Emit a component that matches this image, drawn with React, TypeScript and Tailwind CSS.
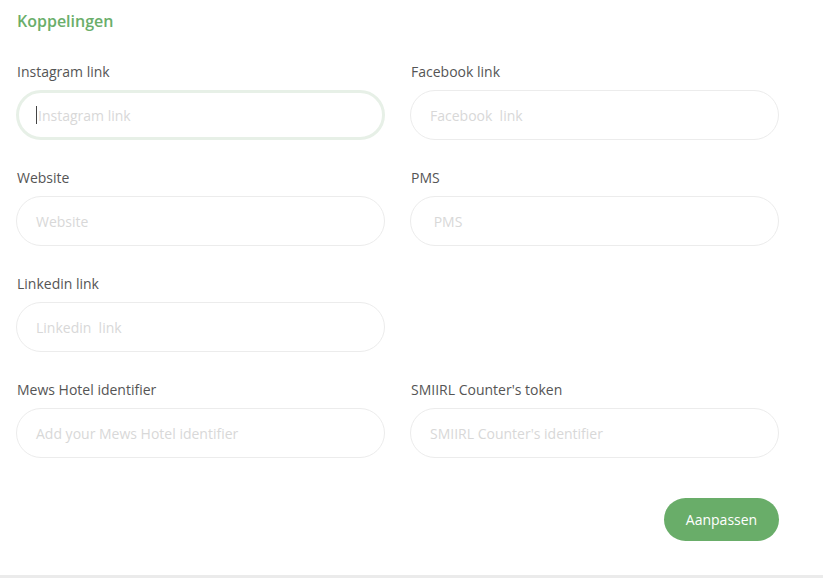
import React from "react";

const Field = ({ label, placeholder, focused }: { label: string; placeholder: string; focused?: boolean }) => (
  <div className="flex flex-col">
    <label className="text-[14px] leading-[20px] text-[#555] mb-[8px] pl-[1px]">{label}</label>
    {focused ? (
      <div className="h-[50px] rounded-full border-[3px] border-[#e7f0e7] flex items-center pl-[17px] box-border">
        <span className="w-px h-[18px] bg-[#444] mr-[1px]" />
        <span className="text-[14px] text-[#d8d8d8]">{placeholder}</span>
      </div>
    ) : (
      <div className="h-[50px] rounded-full border border-[#ececec] flex items-center pl-[19px] box-border">
        <span className="text-[14px] text-[#d8d8d8] whitespace-pre">{placeholder}</span>
      </div>
    )}
  </div>
);

export default function App() {
  return (
    <div className="w-[823px] h-[578px] bg-white flex flex-col overflow-hidden" style={{ fontFamily: '"Open Sans", sans-serif' }}>
      <div className="flex-1 pl-[16px] pt-[9px]">
        <h2 className="text-[16px] leading-[24px] font-semibold text-[#6aae6a] pl-[1px]">Koppelingen</h2>
        <div className="grid grid-cols-[369px_369px] gap-x-[25px] gap-y-[28px] mt-[29px]">
          <Field label="Instagram link" placeholder="Instagram link" focused />
          <Field label="Facebook link" placeholder="Facebook  link" />
          <Field label="Website" placeholder="Website" />
          <Field label="PMS" placeholder=" PMS" />
          <Field label="Linkedin link" placeholder="Linkedin  link" />
          <div />
          <Field label="Mews Hotel identifier" placeholder="Add your Mews Hotel identifier" />
          <Field label="SMIIRL Counter's token" placeholder="SMIIRL Counter's identifier" />
        </div>
        <div className="flex justify-end w-[763px] mt-[40px]">
          <button className="w-[115px] h-[43px] rounded-full bg-[#69ad69] text-white text-[14px]">Aanpassen</button>
        </div>
      </div>
      <div className="h-[3px] bg-[#ebebeb]" />
    </div>
  );
}
